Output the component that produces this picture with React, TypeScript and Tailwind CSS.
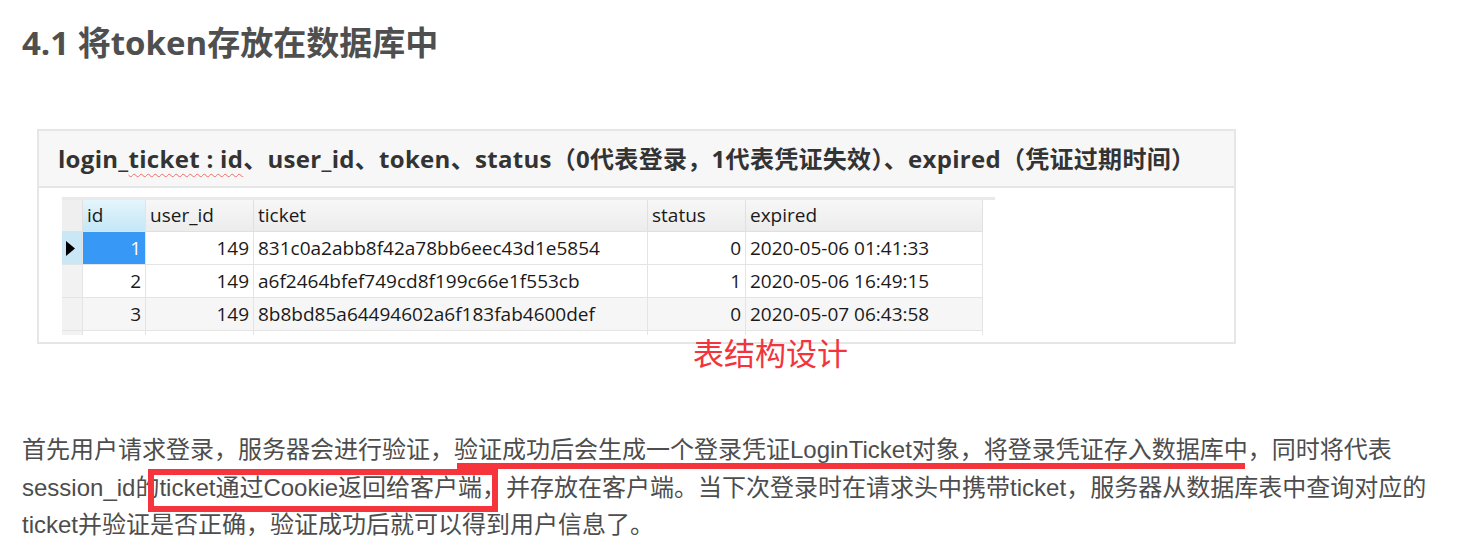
import React from 'react';

const rows = [
  { id: '1', userId: '149', ticket: '831c0a2abb8f42a78bb6eec43d1e5854', status: '0', expired: '2020-05-06 01:41:33' },
  { id: '2', userId: '149', ticket: 'a6f2464bfef749cd8f199c66e1f553cb', status: '1', expired: '2020-05-06 16:49:15' },
  { id: '3', userId: '149', ticket: '8b8bd85a64494602a6f183fab4600def', status: '0', expired: '2020-05-07 06:43:58' },
];

const cell = 'h-[33px] border-r border-b border-[#e4e4e4] px-[4px] flex items-center';

function TableShot() {
  return (
    <div className="w-[921px]">
      {/* toolbar strip above grid */}
      <div className="h-[3px] w-[933px] bg-[#e9e9e9]" />
      <div className="grid grid-cols-[21px_63px_108px_394px_98px_237px] font-['Open_Sans',sans-serif] text-[19px] text-[#1a1a1a]">
        {/* header */}
        <div className="h-[32px] bg-[#efefef] border-r border-b border-[#e0e0e0]" />
        <div className="h-[32px] bg-gradient-to-b from-[#e4f5fc] to-[#c4e7f7] border-r border-b border-[#d8e6ee] px-[4px] flex items-center">id</div>
        {['user_id', 'ticket', 'status', 'expired'].map((h) => (
          <div key={h} className="h-[32px] bg-gradient-to-b from-[#f7f7f7] to-[#ececec] border-r border-b border-[#e0e0e0] px-[4px] flex items-center">
            {h}
          </div>
        ))}

        {rows.map((r, i) => {
          const bg = i === 2 ? 'bg-[#f6f6f6]' : 'bg-white';
          return (
            <React.Fragment key={r.id}>
              <div className={`h-[33px] border-r border-b border-[#e4e4e4] flex items-center pl-[4px] ${i === 0 ? 'bg-[#c9e7f7]' : 'bg-[#f2f2f2]'}`}>
                {i === 0 && (
                  <svg width="9" height="15" viewBox="0 0 9 15">
                    <polygon points="0,0 9,7.5 0,15" fill="#000" />
                  </svg>
                )}
              </div>
              <div className={`${cell} justify-end ${i === 0 ? 'bg-[#3798f5] text-white' : bg}`}>{r.id}</div>
              <div className={`${cell} justify-end ${bg}`}>{r.userId}</div>
              <div className={`${cell} ${bg}`}>{r.ticket}</div>
              <div className={`${cell} justify-end ${bg}`}>{r.status}</div>
              <div className={`${cell} ${bg}`}>{r.expired}</div>
            </React.Fragment>
          );
        })}

        {/* next row, cut off */}
        {[0, 1, 2, 3, 4, 5].map((k) => (
          <div key={k} className={`h-[4px] border-r border-[#e4e4e4] ${k === 0 ? 'bg-[#f2f2f2]' : 'bg-white'}`} />
        ))}
      </div>
    </div>
  );
}

export default function App() {
  return (
    <div className="w-[1459px] h-[559px] bg-white overflow-hidden">
      <h2 className="pl-[22px] pt-[23px] text-[33px] leading-[40px] font-bold text-[#4f4f4f] font-['Open_Sans','Noto_Sans_CJK_SC',sans-serif]">
        4.1 将token存放在数据库中
      </h2>

      {/* screenshot of the table */}
      <div className="relative ml-[37px] mt-[66px] w-[1199px]">
        <div className="border-2 border-[#e6e6e6]">
          <div className="h-[57px] bg-[#f7f7f7] border-b-2 border-[#e6e6e6] flex items-center pl-[19px] font-['Open_Sans','Noto_Sans_CJK_SC',sans-serif] text-[24px] tracking-[0.3px] font-bold text-[#333] whitespace-nowrap">
            <span>login_</span>
            <span className="underline decoration-wavy decoration-[#f06a6a] decoration-1 underline-offset-[5px]">ticket : id</span>
            <span>、user_id、token、status（0代表登录，1代表凭证失效）、expired（凭证过期时间）</span>
          </div>
          <div className="pl-[23px] pt-[9px] pb-[7px]">
            <TableShot />
          </div>
        </div>
        <div className="absolute left-[656px] top-[205px] text-[31px] leading-[36px] text-[#f3343d] font-['Noto_Sans_CJK_SC',sans-serif]">
          表结构设计
        </div>
      </div>

      {/* paragraph with hand-drawn marks */}
      <div className="relative mt-[84px] pl-[22px] text-[24px] text-[#4d4d4d] font-['Liberation_Sans','Noto_Sans_CJK_SC',sans-serif] whitespace-nowrap">
        <div className="h-[40px] leading-[40px] pt-[2px]">
          首先用户请求登录，服务器会进行验证，验证成功后会生成一个登录凭证LoginTicket对象，将登录凭证存入数据库中，同时将代表
        </div>
        <div className="h-[40px] leading-[40px]">
          session_id的ticket通过Cookie返回给客户端，并存放在客户端。当下次登录时在请求头中携带ticket，服务器从数据库表中查询对应的
        </div>
        <div className="h-[34px] leading-[34px]">
          ticket并验证是否正确，验证成功后就可以得到用户信息了。
        </div>
        <div className="absolute left-[457px] top-[35px] w-[788px] h-[6px] bg-[#f5353b]" />
        <div className="absolute left-[148px] top-[41px] w-[350px] h-[43px] border-[6px] border-[#f5353b]" />
      </div>
    </div>
  );
}
